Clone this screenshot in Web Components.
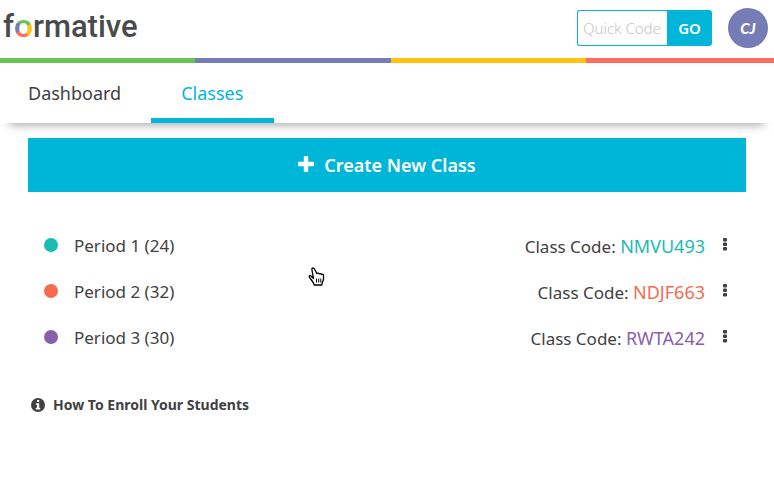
<!DOCTYPE html>
<html lang="en">
<head>
<meta charset="utf-8">
<title>Formative - Classes</title>
<style>
body { margin: 0; background: #fff; color: #414042; font: 17px/24px "Noto Sans", "Open Sans", sans-serif; }
</style>
</head>
<body>
<classes-page></classes-page>
<script>
const define = (name, html, setup) => {
  const template = document.createElement('template');
  template.innerHTML = html;
  customElements.define(name, class extends HTMLElement {
    connectedCallback() {
      if (this.shadowRoot) return;
      const root = this.attachShadow({ mode: 'open' });
      root.append(template.content.cloneNode(true));
      if (setup) setup(this, root);
    }
  });
};

define('brand-logo', `
<style>
:host { display: block; }
a { display: block; padding-bottom: 6px; color: #4a4a4c; text-decoration: none; font: 500 31px/40px Roboto, sans-serif; }
span { font-family: Lato, sans-serif; font-size: 33px; font-weight: 700; color: transparent; background: conic-gradient(from 0deg at 50% 60%, #65c656 0deg 55deg, #ffc20e 65deg 145deg, #ff6b5e 155deg 230deg, #767cb5 240deg 310deg, #65c656 320deg); -webkit-background-clip: text; background-clip: text; }
</style>
<a href="#home">f<span>o</span>rmative</a>`);

define('quick-code', `
<style>
:host { display: block; }
form { display: flex; height: 36px; margin: 0; }
input { box-sizing: border-box; width: 90px; border: 1px solid #00b6d8; border-right: 0; border-radius: 3px 0 0 3px; padding: 0 0 0 5px; background: #fff; color: #414042; font: 300 15px/24px "Noto Sans", sans-serif; outline: 0; }
input::placeholder { color: #c4c4c4; opacity: 1; }
button { width: 45px; padding: 0; border: 0; border-radius: 0 3px 3px 0; background: #00b6d8; color: #fff; font: 600 15px/24px "Noto Sans", sans-serif; }
</style>
<form><input type="text" aria-label="Quick Code" placeholder="Quick Code"><button type="button">GO</button></form>`);

define('user-avatar', `
<style>
:host { display: block; }
button { display: block; width: 40px; height: 40px; padding: 0; border: 0; border-radius: 50%; background: #767cb5; color: #fff; font: italic 900 15px/24px Lato, sans-serif; }
</style>
<button type="button" aria-label="Account CJ"><slot></slot></button>`);

define('app-header', `
<style>
:host { display: block; }
header { display: flex; align-items: center; justify-content: space-between; height: 58px; padding: 0 6px 2px 3px; box-sizing: border-box; }
.tools { display: flex; align-items: center; gap: 16px; }
.stripe { display: grid; grid-template-columns: 26fr 26fr 26fr 25fr; height: 5px; }
.stripe i:nth-child(1) { background: #65c656; }
.stripe i:nth-child(2) { background: #767cb5; }
.stripe i:nth-child(3) { background: #ffc20e; }
.stripe i:nth-child(4) { background: #ff6b5e; }
</style>
<header><brand-logo></brand-logo><div class="tools"><quick-code></quick-code><user-avatar>CJ</user-avatar></div></header>
<div class="stripe"><i></i><i></i><i></i><i></i></div>`);

define('nav-tab', `
<style>
:host { display: block; }
a { display: block; box-sizing: border-box; height: 60px; padding: 18px 31px 0 30px; border-bottom: 5px solid transparent; color: #414042; text-decoration: none; font-size: 18px; line-height: 24px; }
:host(:first-child) a { padding: 18px 30px 0 28px; }
:host([current]) a { color: #00b6d8; border-color: #00b6d8; }
</style>
<a href="#"><slot></slot></a>`, (host, root) => {
  if (host.hasAttribute('current')) root.querySelector('a').setAttribute('aria-current', 'page');
});

define('nav-tabs', `
<style>
:host { display: block; position: relative; }
nav { position: relative; display: flex; background: #fff; }
.shade { position: absolute; inset: auto 10px 0; height: 20px; box-shadow: 0 2px 10px rgba(0,0,0,.35); }
</style>
<div class="shade"></div><nav><slot></slot></nav>`);

define('create-button', `
<style>
:host { display: block; }
button { display: flex; align-items: center; justify-content: center; gap: 10px; width: 100%; height: 54px; padding: 0; border: 0; background: #00b6d8; color: #fff; font: 600 18px/24px "Noto Sans", sans-serif; }
svg { width: 16px; height: 16px; margin-bottom: 2px; }
</style>
<button type="button"><svg viewBox="0 0 16 16" aria-hidden="true"><path fill="#fff" d="M6.600 0h2.800q.8 0 .8.8v5h5q.8 0 .8.8v2.800q0 .8-.8.8h-5v5q0 .8-.8.8H6.600q-.8 0-.8-.8v-5h-5Q0 10.200 0 9.400V6.600q0-.8.8-.8h5v-5Q5.800 0 6.600 0z"/></svg><span><slot></slot></span></button>`);

define('class-row', `
<style>
:host { display: flex; align-items: center; height: 46px; padding: 0 14px 0 16px; }
.dot { width: 14px; height: 14px; margin: 0 16px 3px 0; border-radius: 50%; background: var(--tone); }
.name { flex: 1; }
.code { color: var(--tone); font-size: 18px; }
button { display: block; width: 14px; height: 24px; margin: 0 0 4px 13px; padding: 0; border: 0; background: none; }
svg { display: block; width: 14px; height: 24px; }
</style>
<span class="dot"></span><span class="name"><slot></slot></span><span>Class Code: <span class="code"></span></span>
<button type="button" aria-label="Class options"><svg viewBox="0 0 14 24" fill="#414042" aria-hidden="true"><rect x="5" y="6" width="4" height="3.400" rx="1"/><rect x="5" y="10.500" width="4" height="3.400" rx="1"/><rect x="5" y="15" width="4" height="3.400" rx="1"/></svg></button>`, (host, root) => {
  root.querySelector('.code').textContent = host.getAttribute('code');
});

define('help-link', `
<style>
:host { display: block; }
a { display: inline-flex; align-items: center; gap: 8px; color: #414042; text-decoration: none; font-size: 14px; font-weight: 700; line-height: 24px; }
svg { width: 14px; height: 14px; }
</style>
<a href="#help"><svg viewBox="0 0 14 14" aria-hidden="true"><circle cx="7" cy="7" r="7" fill="#414042"/><path fill="#fff" d="M6 2h2.200v2H6zM4.800 5.200h3.400v4.600h1v1.600H4.800V9.800H6V6.800H4.800z"/></svg><slot></slot></a>`);

define('hand-pointer', `
<style>
:host { position: absolute; left: 308px; top: 267px; pointer-events: none; }
svg { display: block; width: 17px; height: 19px; }
</style>
<svg viewBox="0 0 17 19" aria-hidden="true"><path d="M5.500 11.500 2.800 8.800Q1.500 8 1.200 9.300q0 1 1.500 2.700l2.500 3.500 1 2.500h7.500l.6-2.500 1.200-2.700V8q-.6-1.500-2-.4-.7-1.700-2.300-.7-.8-1.500-2.400-.4L6.500 2q-.9-1.600-2.300-.7-.7.700-.2 1.800z" fill="#fff" stroke="#000" stroke-width="1.300" stroke-linejoin="round"/><path d="M8.500 11.500v4M10.700 11.500v4M12.800 11.500v4" stroke="#000" fill="none"/></svg>`);

define('classes-page', `
<style>
:host { display: block; }
main { padding: 15px 28px; }
.list { padding: 31px 0 32px; }
help-link { padding-left: 3px; }
</style>
<app-header></app-header>
<nav-tabs><nav-tab>Dashboard</nav-tab><nav-tab current>Classes</nav-tab></nav-tabs>
<main>
<create-button>Create New Class</create-button>
<div class="list">
<class-row code="NMVU493" style="--tone:#19bbb2">Period 1 (24)</class-row>
<class-row code="NDJF663" style="--tone:#f46b52">Period 2 (32)</class-row>
<class-row code="RWTA242" style="--tone:#8860aa">Period 3 (30)</class-row>
</div>
<help-link>How To Enroll Your Students</help-link>
</main>
<hand-pointer></hand-pointer>`);
</script>
</body>
</html>
